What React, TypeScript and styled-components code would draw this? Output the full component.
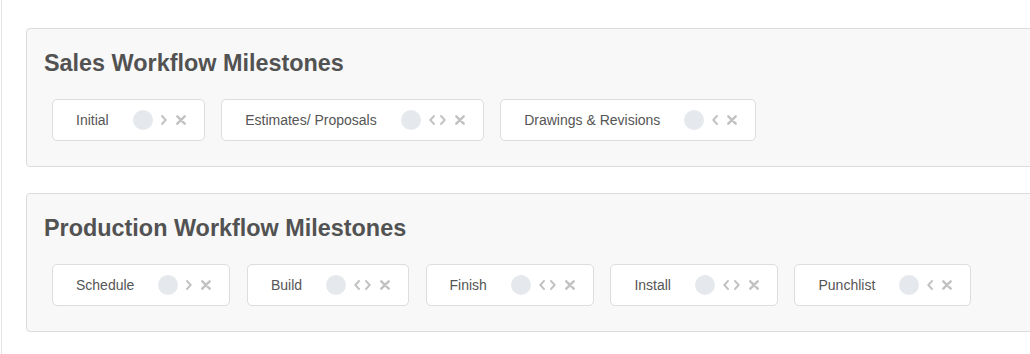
import React from "react";
import styled, { createGlobalStyle } from "styled-components";

const Global = createGlobalStyle`
  html, body {
    margin: 0;
    padding: 0;
    background: #ffffff;
    overflow: hidden;
  }
  body {
    font-family: "Liberation Sans", Arial, Helvetica, sans-serif;
  }
`;

const Page = styled.div`
  margin-left: 1px;
  border-left: 1px solid #e4e4e4;
  min-height: 354px;
  box-sizing: border-box;
  padding: 28px 0 0 24px;
  display: flex;
  flex-direction: column;
  gap: 26px;
`;

const Panel = styled.section`
  width: 1040px;
  box-sizing: border-box;
  background: #f8f8f8;
  border: 1px solid #dcdcdc;
  border-radius: 4px;
  padding: 20px 0 25px 17px;
`;

const Title = styled.h3`
  margin: 0;
  font-size: 23.4px;
  line-height: 28px;
  font-weight: 700;
  color: #525252;
`;

const Row = styled.div`
  display: flex;
  gap: 16.5px;
  margin-top: 22px;
  padding-left: 8px;
`;

const Chip = styled.div`
  display: flex;
  align-items: center;
  height: 42px;
  box-sizing: border-box;
  background: #ffffff;
  border: 1px solid #dddddd;
  border-radius: 5px;
  padding: 0 18px 0 23px;
`;

const Label = styled.span`
  font-size: 14px;
  color: #555555;
  margin-right: 24px;
  white-space: nowrap;
`;

const Dot = styled.span`
  width: 20px;
  height: 20px;
  border-radius: 50%;
  background: #e5e8ec;
  flex: none;
`;

const Nav = styled.span`
  display: flex;
  align-items: center;
  gap: 5px;
  margin-left: 8px;
`;

const IconButton = styled.button<{ $w: number }>`
  appearance: none;
  border: 0;
  padding: 0;
  background: none;
  width: ${(p) => p.$w}px;
  height: 10px;
  display: flex;
  align-items: center;
  justify-content: center;
  color: #c2c2c2;
  cursor: pointer;
`;

const Close = styled(IconButton)`
  margin-left: 9px;
`;

const ChevronLeft = () => (
  <svg width="6" height="10" viewBox="0 0 6 10" fill="none">
    <path d="M5 1 L1.3 5 L5 9" stroke="currentColor" strokeWidth="1.9" strokeLinecap="round" strokeLinejoin="round" />
  </svg>
);

const ChevronRight = () => (
  <svg width="6" height="10" viewBox="0 0 6 10" fill="none">
    <path d="M1 1 L4.7 5 L1 9" stroke="currentColor" strokeWidth="1.9" strokeLinecap="round" strokeLinejoin="round" />
  </svg>
);

const Times = () => (
  <svg width="10" height="10" viewBox="0 0 10 10" fill="none">
    <path d="M1.3 1.3 L8.7 8.7 M8.7 1.3 L1.3 8.7" stroke="currentColor" strokeWidth="2.4" strokeLinecap="round" />
  </svg>
);

type Milestone = { name: string };

const Milestones: React.FC<{ title: string; items: Milestone[] }> = ({ title, items }) => (
  <Panel>
    <Title>{title}</Title>
    <Row>
      {items.map((m, i) => (
        <Chip key={m.name}>
          <Label>{m.name}</Label>
          <Dot />
          <Nav>
            {i > 0 && (
              <IconButton $w={6} aria-label="Move left">
                <ChevronLeft />
              </IconButton>
            )}
            {i < items.length - 1 && (
              <IconButton $w={6} aria-label="Move right">
                <ChevronRight />
              </IconButton>
            )}
          </Nav>
          <Close $w={10} aria-label="Remove">
            <Times />
          </Close>
        </Chip>
      ))}
    </Row>
  </Panel>
);

export default function App() {
  return (
    <>
      <Global />
      <Page>
        <Milestones
          title="Sales Workflow Milestones"
          items={[{ name: "Initial" }, { name: "Estimates/ Proposals" }, { name: "Drawings & Revisions" }]}
        />
        <Milestones
          title="Production Workflow Milestones"
          items={[
            { name: "Schedule" },
            { name: "Build" },
            { name: "Finish" },
            { name: "Install" },
            { name: "Punchlist" },
          ]}
        />
      </Page>
    </>
  );
}
